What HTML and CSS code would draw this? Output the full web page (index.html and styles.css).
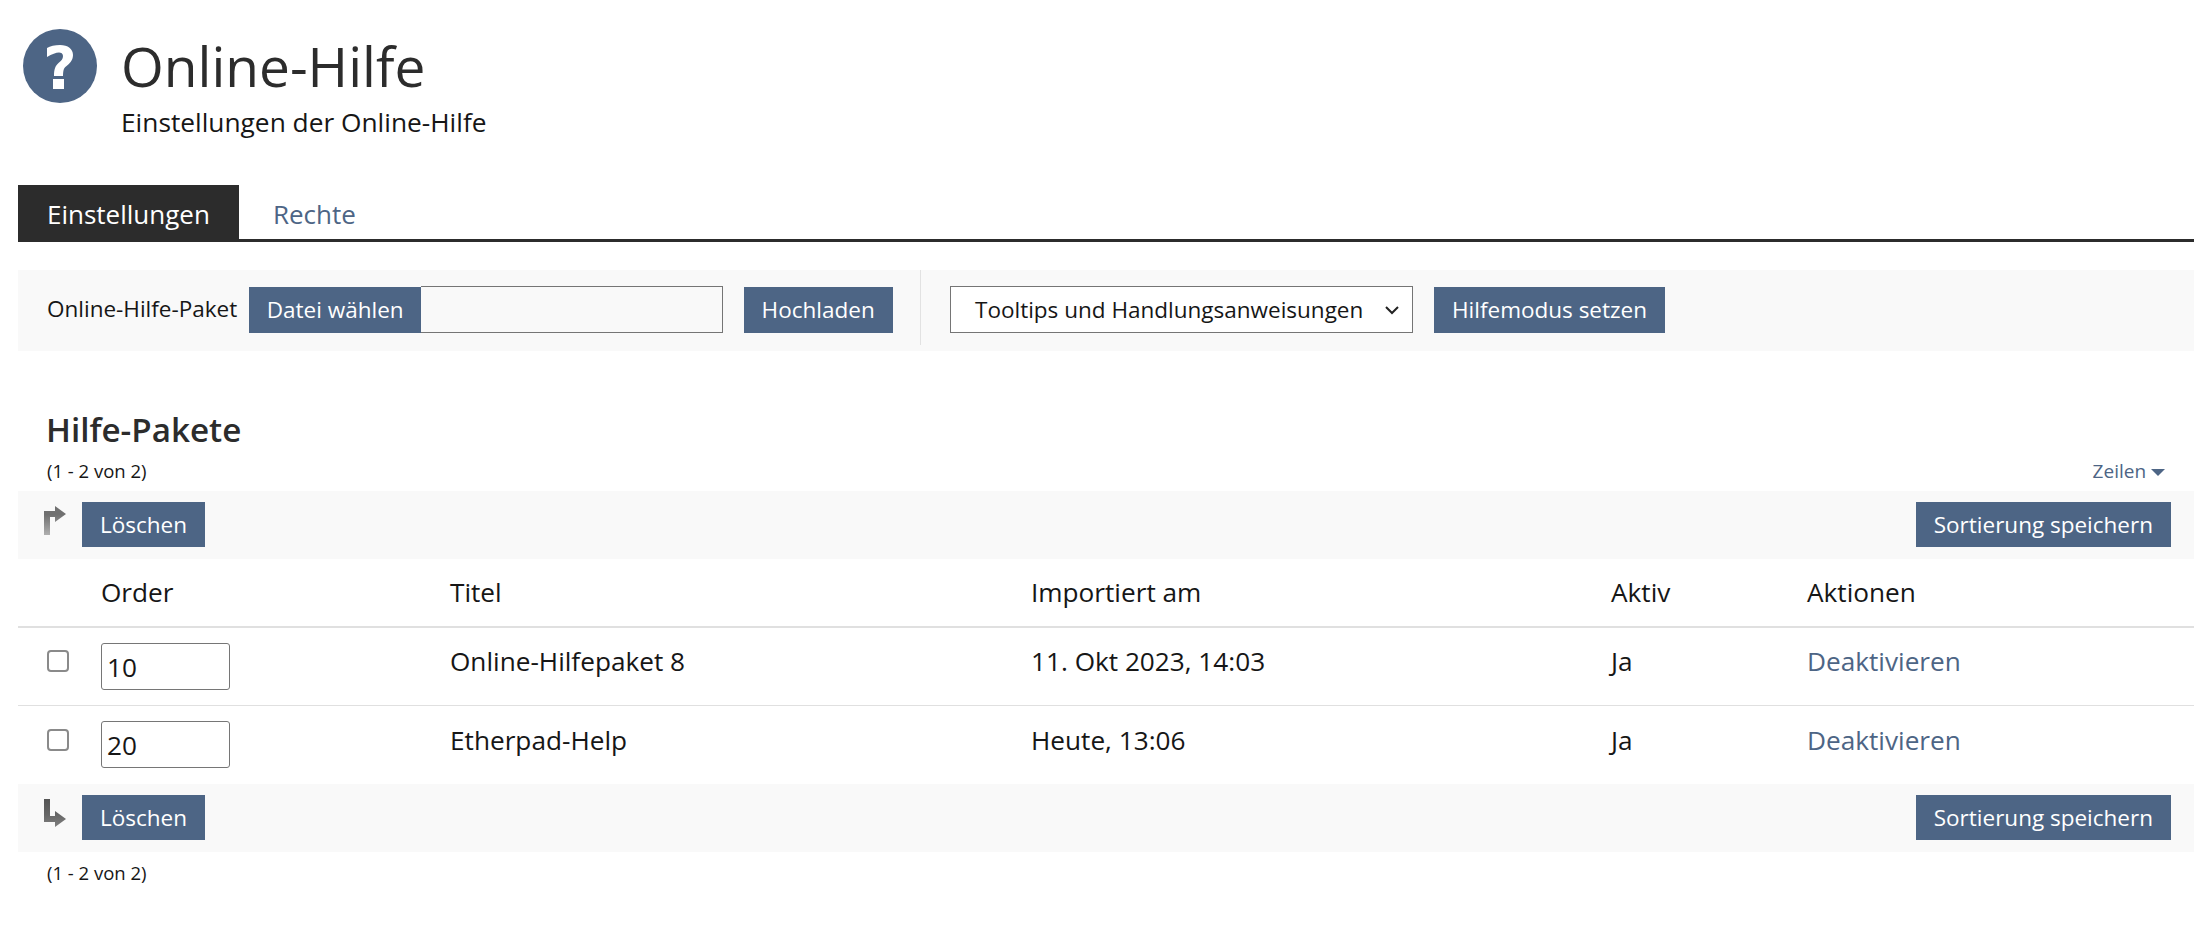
FILE: index.html
```html
<!DOCTYPE html>
<html lang="de">
<head>
<meta charset="utf-8">
<title>Online-Hilfe</title>
<link rel="stylesheet" href="styles.css">
</head>
<body>
<header class="head">
  <svg class="head-icon" width="74" height="74" viewBox="0 0 74 74" aria-hidden="true">
    <circle cx="37" cy="37" r="37" fill="#4d6585"/>
    <path d="M24 19 C27 17 32 16 37 16 C45 16 50 20 50 26 C50 32 46 35 43 37.500 C41 39 40 41 40 47 L31 47 C31 41 32 37 35.500 34 C38.500 31.500 40 30 40 27 C40 24.500 38 23.500 36 23.500 C33 23.500 29 25 24 28 Z" fill="#fff"/>
    <rect x="30" y="50" width="11" height="10" fill="#fff"/>
  </svg>
  <div class="head-text">
    <h1>Online-Hilfe</h1>
    <p class="sub">Einstellungen der Online-Hilfe</p>
  </div>
</header>
<nav class="tabs">
  <a class="tab active">Einstellungen</a>
  <a class="tab">Rechte</a>
</nav>
<section class="toolbar">
  <div class="tool-group first">
    <span class="tool-label">Online-Hilfe-Paket</span>
    <span class="btn file-btn">Datei wählen</span>
    <span class="file-field"></span>
    <button class="btn upload">Hochladen</button>
  </div>
  <div class="tool-group second">
    <span class="fake-select">
      <span>Tooltips und Handlungsanweisungen</span>
      <svg width="16" height="10" viewBox="0 0 16 10" aria-hidden="true"><path d="M2 2 L8 8 L14 2" fill="none" stroke="#222" stroke-width="2"/></svg>
    </span>
    <button class="btn">Hilfemodus setzen</button>
  </div>
</section>
<h2>Hilfe-Pakete</h2>
<div class="meta-row">
  <span class="count">(1 - 2 von 2)</span>
  <a class="rows">Zeilen <i class="caret"></i></a>
</div>
<div class="actions">
  <svg class="arrow" width="24" height="32" viewBox="0 0 24 32" aria-hidden="true">
    <defs><linearGradient id="g1" x1="0" y1="1" x2="0" y2="0"><stop offset="0" stop-color="#b0b0b0"/><stop offset="0.700" stop-color="#707070"/><stop offset="1" stop-color="#707070"/></linearGradient></defs>
    <path d="M1 30 L1 6 L12 6 L12 1 L23 9 L12 17 L12 12 L7 12 L7 30 Z" fill="url(#g1)"/>
  </svg>
  <button class="btn">Löschen</button>
  <button class="btn push">Sortierung speichern</button>
</div>
<table>
  <thead>
    <tr><th class="c0"></th><th class="c1">Order</th><th class="c2">Titel</th><th class="c3">Importiert am</th><th class="c4">Aktiv</th><th>Aktionen</th></tr>
  </thead>
  <tbody>
    <tr>
      <td class="up"><span class="check"></span></td>
      <td><span class="num">10</span></td>
      <td class="up">Online-Hilfepaket 8</td>
      <td class="up">11. Okt 2023, 14:03</td>
      <td class="up">Ja</td>
      <td class="up"><a class="link">Deaktivieren</a></td>
    </tr>
    <tr>
      <td class="up"><span class="check"></span></td>
      <td><span class="num">20</span></td>
      <td class="up">Etherpad-Help</td>
      <td class="up">Heute, 13:06</td>
      <td class="up">Ja</td>
      <td class="up"><a class="link">Deaktivieren</a></td>
    </tr>
  </tbody>
</table>
<div class="actions">
  <svg class="arrow" width="24" height="32" viewBox="0 0 24 32" aria-hidden="true">
    <defs><linearGradient id="g2" x1="0" y1="0" x2="0" y2="1"><stop offset="0" stop-color="#555"/><stop offset="0.550" stop-color="#666"/><stop offset="1" stop-color="#808080"/></linearGradient></defs>
    <path d="M1 1 L7 1 L7 18 L12 18 L12 13 L23 21 L12 29 L12 24 L1 24 Z" fill="url(#g2)"/>
  </svg>
  <button class="btn">Löschen</button>
  <button class="btn push">Sortierung speichern</button>
</div>
<div class="count foot">(1 - 2 von 2)</div>
</body>
</html>
```
FILE: styles.css
```css
* { box-sizing: border-box; }
html, body { margin: 0; background: #fff; }
body {
  padding: 0 18px 0 18px;
  font-family: "Open Sans", sans-serif;
  font-size: 22.5px;
  color: #161616;
  min-height: 937px;
}
.head { display: flex; align-items: flex-start; padding: 29px 0 0 5px; height: 185px; }
.head-icon { flex: none; margin-right: 24px; }
h1 { margin: 0; font-size: 55px; line-height: 74px; font-weight: 400; color: #2c2c2c; }
.sub { margin: 0; padding-top: 3px; font-size: 26.300px; line-height: 32px; }
.tabs { display: flex; height: 57px; border-bottom: 3px solid #2c2c2c; }
.tab { display: block; height: 57px; padding: 0 29px; line-height: 59px; font-size: 26px; color: #4d6585; }
.tab.active { background: #2c2c2c; color: #fff; }
.tab + .tab { padding: 0 0 0 34px; }
.toolbar { display: flex; height: 81px; margin-top: 28px; background: #f9f9f9; align-items: flex-start; }
.tool-group { display: flex; align-items: center; height: 79px; }
.first { width: 903px; padding: 16px 0 4px 29px; height: 75px; border-right: 1px solid #e2e2e2; align-items: flex-start; }
.first .tool-label { line-height: 45px; }
.second { padding-left: 29px; }
.tool-label { margin-right: 12px; }
.btn {
  display: inline-block; height: 45px; border: 0; padding: 0 18px; margin: 0;
  background: #4d6585; color: #fff; font: inherit; line-height: 45px; white-space: nowrap;
}
.toolbar .btn { height: 46px; margin-top: 1px; line-height: 46px; }
.file-btn { padding: 0 17.500px; }
.file-field { display: block; width: 302px; height: 47px; border: 1px solid #757575; border-left: 0; margin-right: 20.500px; }
.fake-select {
  display: flex; align-items: center; justify-content: space-between; width: 463px; height: 47px;
  background: #fff; border: 1px solid #757575; padding: 0 12px 0 24px; margin-right: 21px;
}
h2 { margin: 0; padding: 58px 0 0 28px; font-size: 33.200px; line-height: 41px; font-weight: 600; color: #2c2c2c; }
.meta-row { display: flex; justify-content: space-between; align-items: center; padding: 0 29px; height: 41px; }
.count { font-size: 18.500px; }
.rows { font-size: 19px; color: #4d6585; }
.caret { display: inline-block; width: 0; height: 0; border: 7px solid transparent; border-top-color: #4d6585; border-bottom: 0; vertical-align: 2px; }
.actions { display: flex; align-items: center; height: 68px; background: #f9f9f9; padding: 0 23px 1px 25px; width: 100%; }
.arrow { flex: none; margin-right: 15px; margin-top: -8px; }
.push { margin-left: auto; }
table { border-collapse: collapse; width: 100%; table-layout: fixed; }
th { font-weight: 400; text-align: left; height: 68px; border-bottom: 2px solid #e0e0e0; padding: 0 0 2px; font-size: 26.200px; }
td { height: 78px; border-bottom: 1px solid #e0e0e0; padding: 0; font-size: 26.200px; vertical-align: middle; }
td.up { padding-bottom: 10px; }
tbody tr:last-child td { border-bottom: 0; height: 79px; }
.c0 { width: 83px; }
.c1 { width: 349px; }
.c2 { width: 581px; }
.c3 { width: 580px; }
.c4 { width: 196px; }
.check { display: block; width: 22px; height: 22px; margin-left: 29px; border: 2px solid #8a8a8a; border-radius: 4px; background: #fff; }
.num { display: block; width: 129px; height: 47px; border: 1px solid #767676; border-radius: 3px; padding-left: 5px; line-height: 47px; background: #fff; }
.link { color: #4d6585; }
.foot { padding: 8px 0 0 29px; }
```
